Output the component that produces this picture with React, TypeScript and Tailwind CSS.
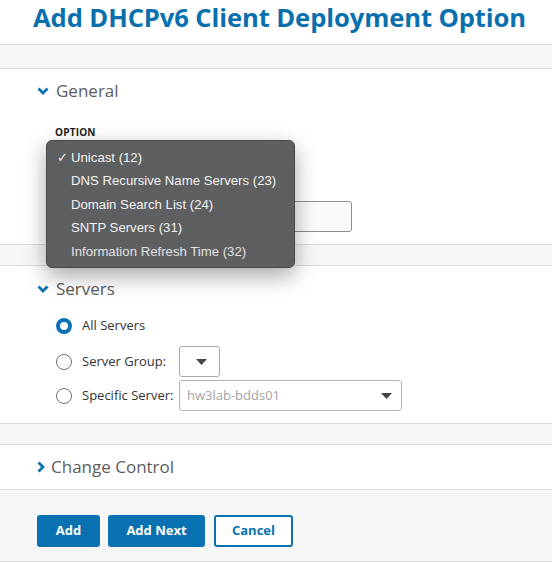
import React from 'react';

const FONT = { fontFamily: '"Open Sans", "Liberation Sans", sans-serif' };
const MENU_FONT = { fontFamily: '"Liberation Sans", Arial, sans-serif' };

const MENU_ITEMS = [
  { label: 'Unicast (12)', checked: true },
  { label: 'DNS Recursive Name Servers (23)' },
  { label: 'Domain Search List (24)' },
  { label: 'SNTP Servers (31)' },
  { label: 'Information Refresh Time (32)', dim: true },
];

function ChevronDown() {
  return (
    <svg width="12" height="8" viewBox="0 0 12 8" aria-hidden="true">
      <path d="M1.5 1.5 L6 6 L10.5 1.5" fill="none" stroke="#0a72b4" strokeWidth="2.8" />
    </svg>
  );
}

function ChevronRight() {
  return (
    <svg width="8" height="12" viewBox="0 0 8 12" aria-hidden="true">
      <path d="M1.5 1.5 L6 6 L1.5 10.5" fill="none" stroke="#0a72b4" strokeWidth="2.8" />
    </svg>
  );
}

function Caret() {
  return (
    <svg width="11" height="6" viewBox="0 0 11 6" aria-hidden="true">
      <path d="M0 0 H11 L5.5 6 Z" fill="#444" />
    </svg>
  );
}

function Radio({ checked }: { checked?: boolean }) {
  return checked ? (
    <span className="block w-[16px] h-[16px] rounded-full border-[4px] border-[#0a72b4] bg-white" />
  ) : (
    <span className="block w-[16px] h-[16px] rounded-full border-[1.5px] border-[#6f6f6f] bg-white" />
  );
}

export default function App() {
  return (
    <div className="w-[552px] h-[562px] overflow-hidden bg-[#f7f7f7] text-[#333]" style={FONT}>
      {/* title */}
      <div className="h-[45px] bg-white border-b border-[#dcdcdc] pl-[33px]">
        <h1 className="text-[25.6px] leading-[36px] font-bold text-[#0a70ad] tracking-[-0.1px]">
          Add DHCPv6 Client Deployment Option
        </h1>
      </div>
      <div className="h-[24px] border-b border-[#dcdcdc]" />

      {/* General */}
      <section className="relative h-[176px] bg-white border-b border-[#dcdcdc] pl-[37px] pt-[10px]">
        <div className="flex items-center h-[24px] gap-[7px]">
          <ChevronDown />
          <span className="text-[17px] text-[#5c5c5c]">General</span>
        </div>
        <div className="ml-[18px] mt-[22px] text-[10px] leading-[14px] font-bold text-[#222] tracking-[0.2px]">OPTION</div>
        <div className="ml-[18px] mt-[62px] w-[297px] h-[31px] rounded-[3px] border border-[#8e8e8e] bg-[#fafafa]" />

        {/* native popup */}
        <div
          className="absolute left-[46px] top-[71px] w-[249px] h-[128px] rounded-[6px] bg-[#5e5f60] border border-[#4a4a4a] shadow-[0_8px_22px_rgba(0,0,0,0.35)] pt-[5px]"
          style={MENU_FONT}
        >
          {MENU_ITEMS.map(item => (
            <div key={item.label} className="flex items-center h-[23.5px] text-[13.2px]">
              <span className="w-[24px] pl-[10px] text-[#eeeeee] text-[13px]">{item.checked ? '✓' : ''}</span>
              <span className={item.dim ? 'text-[#e0e0e0]' : 'text-[#f2f2f2]'}>{item.label}</span>
            </div>
          ))}
        </div>
      </section>
      <div className="h-[21px] border-b border-[#dcdcdc]" />

      {/* Servers */}
      <section className="h-[158px] bg-white border-b border-[#dcdcdc] pl-[37px] pt-[11px]">
        <div className="flex items-center h-[24px] gap-[7px]">
          <ChevronDown />
          <span className="text-[17px] text-[#5c5c5c]">Servers</span>
        </div>
        <div className="ml-[19px] mt-[11px] flex flex-col gap-[3px] text-[13px] text-[#333]">
          <div className="flex items-center h-[28px] mb-[3px]">
            <Radio checked />
            <span className="ml-[10px]">All Servers</span>
          </div>
          <div className="flex items-center h-[31px]">
            <Radio />
            <span className="ml-[10px] w-[97px]">Server Group:</span>
            <div className="w-[41px] h-[31px] rounded-[3px] border border-[#a8a8a8] bg-white flex items-center justify-center pl-[3px] pt-[1px]">
              <Caret />
            </div>
          </div>
          <div className="flex items-center h-[31px]">
            <Radio />
            <span className="ml-[10px] w-[97px]">Specific Server:</span>
            <div className="w-[223px] h-[31px] rounded-[3px] border border-[#b4b4b4] bg-white flex items-center justify-between pl-[7px] pr-[9px]">
              <span className="text-[#a3a3a3]">hw3lab-bdds01</span>
              <Caret />
            </div>
          </div>
        </div>
      </section>
      <div className="h-[21px] border-b border-[#dcdcdc]" />

      {/* Change Control */}
      <section className="h-[45px] bg-white border-b border-[#dcdcdc] pl-[37px] flex items-center gap-[6px]">
        <ChevronRight />
        <span className="text-[17px] text-[#5c5c5c]">Change Control</span>
      </section>

      {/* actions */}
      <div className="h-[72px] border-b border-[#dcdcdc] pl-[37px] pt-[25px] flex gap-[8px]">
        <button className="w-[63px] h-[32px] rounded-[3px] bg-[#0a72b0] text-white text-[13px] font-bold">Add</button>
        <button className="w-[97px] h-[32px] rounded-[3px] bg-[#0a72b0] text-white text-[13px] font-bold">Add Next</button>
        <button className="w-[79px] h-[32px] rounded-[3px] bg-white border-2 border-[#0a72b0] text-[#0a72b0] text-[13px] font-bold ml-[1px]">Cancel</button>
      </div>
    </div>
  );
}
